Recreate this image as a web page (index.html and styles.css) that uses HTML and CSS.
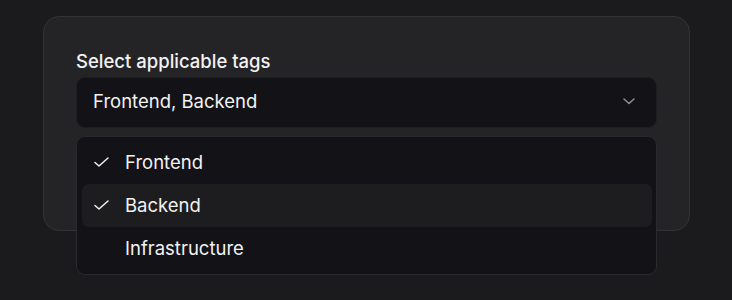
FILE: index.html
```html
<!DOCTYPE html>
<html lang="en">
<head>
    <meta charset="UTF-8">
    <title>Select tags</title>
    <link rel="stylesheet" href="styles.css">
</head>
<body>
<section class="card">
    <label class="label">Select applicable tags</label>
    <div class="select">
        <button class="trigger" type="button">
            <span>Frontend, Backend</span>
            <svg class="chevron" width="16" height="16" viewBox="0 0 16 16" fill="none">
                <path d="M3 6l5 4.5L13 6" stroke="currentColor" stroke-width="1.5" stroke-linecap="round" stroke-linejoin="round"/>
            </svg>
        </button>
        <ul class="menu">
            <li class="item">
                <svg class="check" width="16" height="16" viewBox="0 0 16 16" fill="none">
                    <path d="M2 8.5l4 3.5L15 4" stroke="currentColor" stroke-width="1.5" stroke-linecap="round" stroke-linejoin="round"/>
                </svg>
                <span>Frontend</span>
            </li>
            <li class="item hover">
                <svg class="check" width="16" height="16" viewBox="0 0 16 16" fill="none">
                    <path d="M2 8.5l4 3.5L15 4" stroke="currentColor" stroke-width="1.5" stroke-linecap="round" stroke-linejoin="round"/>
                </svg>
                <span>Backend</span>
            </li>
            <li class="item">
                <span class="check"></span>
                <span>Infrastructure</span>
            </li>
        </ul>
    </div>
</section>
</body>
</html>
```

FILE: styles.css
```css
* {
    box-sizing: border-box;
}
html,
body {
    height: 300px;
}
body {
    margin: 0;
    padding: 16px 42px 0 43px;
    background: #1b1b1d;
    font-family: Inter, "Liberation Sans", sans-serif;
    color: #f2f2f3;
}
.card {
    width: 647px;
    height: 215px;
    padding: 31px 32px 0;
    background: #242426;
    border: 1px solid #333336;
    border-radius: 16px;
}
.label {
    display: block;
    font-size: 18.5px;
    font-weight: 500;
    line-height: 26px;
    margin-bottom: 3px;
}
.select {
    position: relative;
}
.trigger {
    display: flex;
    align-items: center;
    justify-content: space-between;
    width: 100%;
    height: 51px;
    padding: 0 19px 3px 16px;
    background: #131317;
    border: 1px solid #1e1e22;
    border-radius: 9px;
    color: #f2f2f3;
    font: 18.5px Inter, "Liberation Sans", sans-serif;
}
.chevron {
    color: #8e8e94;
}
.menu {
    position: absolute;
    top: 59px;
    left: 0;
    right: 0;
    margin: 0;
    padding: 4px 4px 4px 5px;
    list-style: none;
    background: #131317;
    border: 1px solid #2a2a2e;
    border-radius: 9px;
}
.item {
    display: flex;
    align-items: center;
    gap: 16px;
    height: 43px;
    padding: 0 0 2px 11px;
    border-radius: 7px;
    font-size: 18.5px;
}
.item.hover {
    background: #1d1d20;
}
.check {
    width: 16px;
    height: 16px;
    color: #f2f2f3;
}
```
